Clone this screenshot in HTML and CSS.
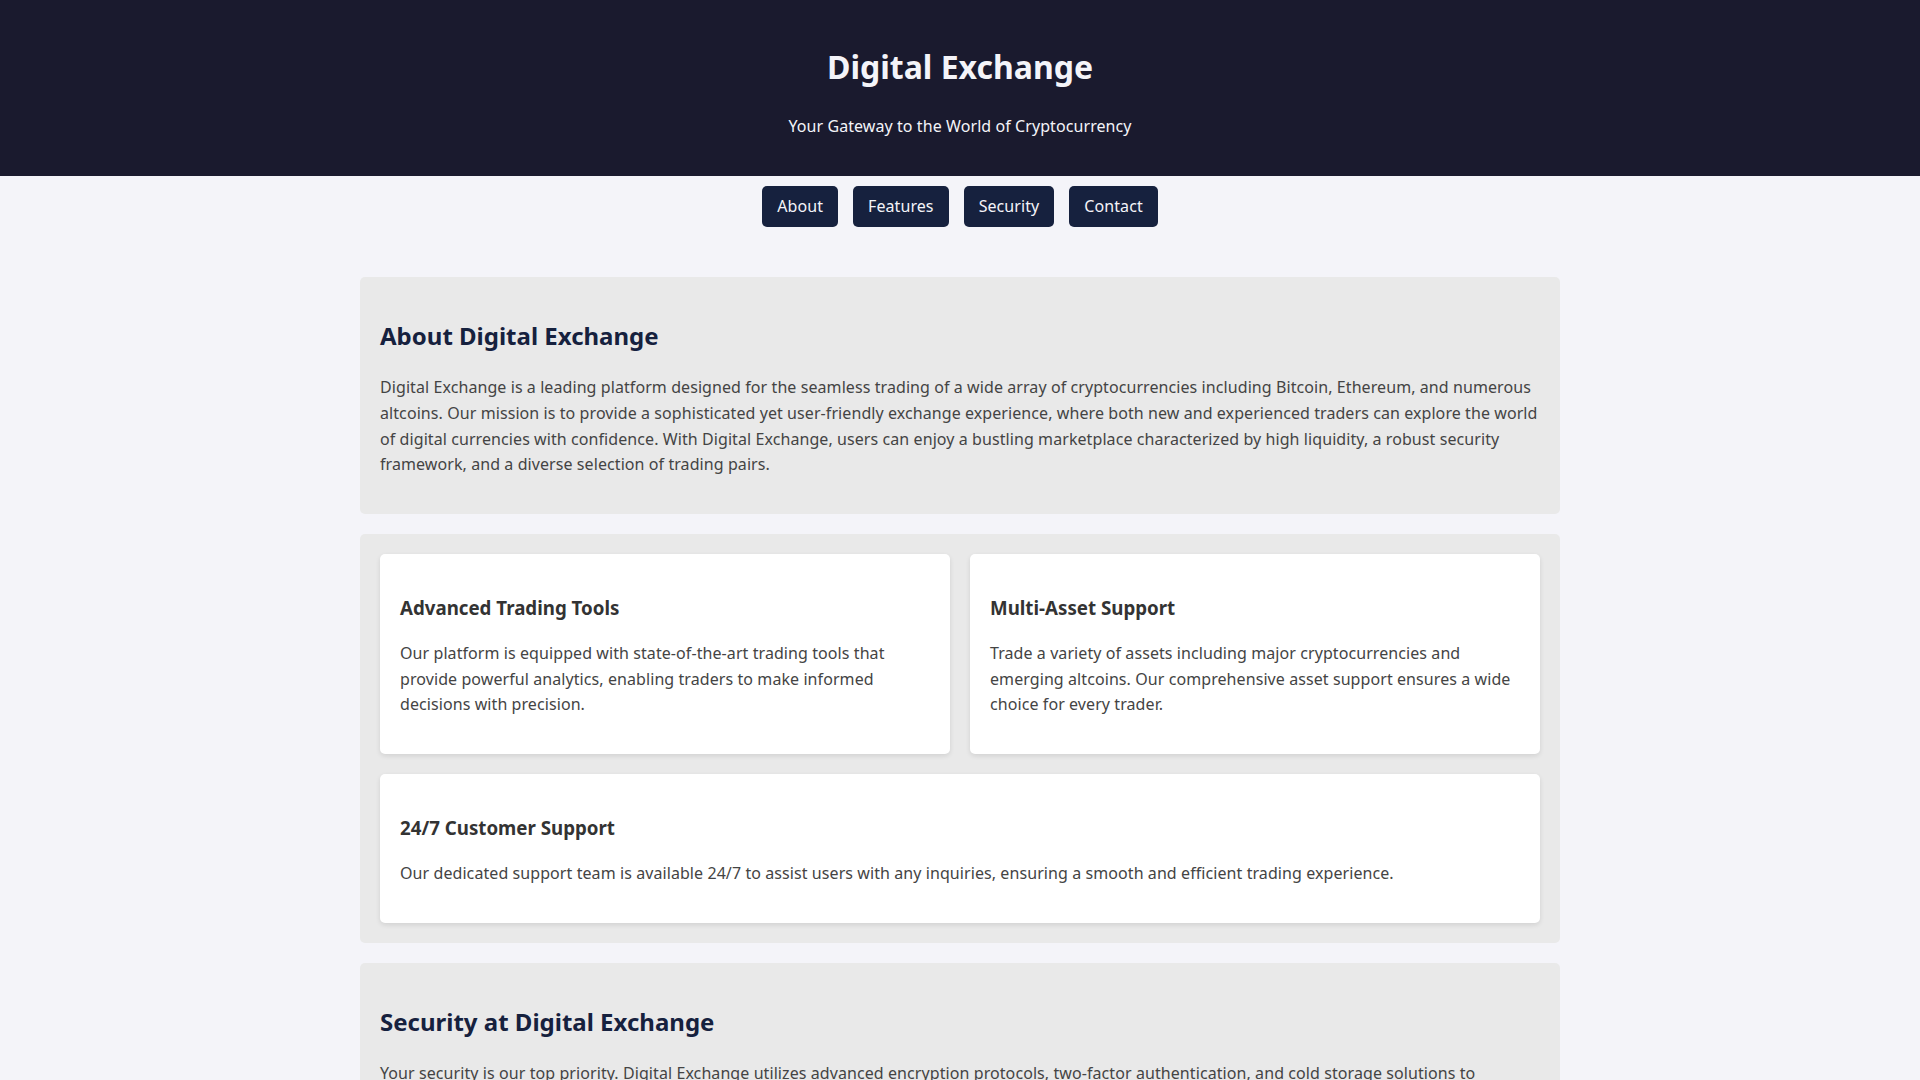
FILE: index.html
```html
<!DOCTYPE html>
<html lang="en">
<head>
    <meta charset="UTF-8">
    <meta name="viewport" content="width=device-width, initial-scale=1.0">
    <title>Digital Exchange</title>
    <link rel="stylesheet" href="styles.css">
</head>
<body>
    <header>
        <h1>Digital Exchange</h1>
        <p>Your Gateway to the World of Cryptocurrency</p>
    </header>
    <nav>
        <a href="#about">About</a>
        <a href="#features">Features</a>
        <a href="#security">Security</a>
        <a href="#contact">Contact</a>
    </nav>
    <main>
        <section id="about">
            <h2>About Digital Exchange</h2>
            <p>Digital Exchange is a leading platform designed for the seamless trading of a wide array of cryptocurrencies including Bitcoin, Ethereum, and numerous altcoins. Our mission is to provide a sophisticated yet user-friendly exchange experience, where both new and experienced traders can explore the world of digital currencies with confidence. With Digital Exchange, users can enjoy a bustling marketplace characterized by high liquidity, a robust security framework, and a diverse selection of trading pairs.</p>
        </section>
        <section id="features" class="features">
            <div class="feature">
                <h3>Advanced Trading Tools</h3>
                <p>Our platform is equipped with state-of-the-art trading tools that provide powerful analytics, enabling traders to make informed decisions with precision.</p>
            </div>
            <div class="feature">
                <h3>Multi-Asset Support</h3>
                <p>Trade a variety of assets including major cryptocurrencies and emerging altcoins. Our comprehensive asset support ensures a wide choice for every trader.</p>
            </div>
            <div class="feature wide">
                <h3>24/7 Customer Support</h3>
                <p>Our dedicated support team is available 24/7 to assist users with any inquiries, ensuring a smooth and efficient trading experience.</p>
            </div>
        </section>
        <section id="security">
            <h2>Security at Digital Exchange</h2>
            <p>Your security is our top priority. Digital Exchange utilizes advanced encryption protocols, two-factor authentication, and cold storage solutions to safeguard your assets. Our systems are continuously monitored and regularly audited to keep your funds and personal information protected.</p>
        </section>
        <section id="contact">
            <h2>Contact Us</h2>
            <p>Have questions or need assistance? Reach out to our team at support@digitalexchange.com and we will get back to you as soon as possible.</p>
        </section>
    </main>
    <footer>
        <p>&copy; 2024 Digital Exchange. All rights reserved.</p>
    </footer>
</body>
</html>
```

FILE: styles.css
```css
body {
    font-family: 'Noto Sans', 'Open Sans', sans-serif;
    line-height: 1.6;
    letter-spacing: 0.08px;
    margin: 0;
    padding: 0;
    background-color: #f4f4f9;
    color: #333;
}
h1, h2, h3 {
    letter-spacing: 0;
}
header {
    background-color: #1a1a2e;
    color: #f4f4f9;
    text-align: center;
    padding: 20px;
}
header h1 {
    font-size: 2em;
    margin: 0.67em 0;
}
nav {
    display: flex;
    justify-content: center;
    gap: 15px;
    padding: 10px;
}
nav a {
    background-color: #16213e;
    color: #f4f4f9;
    text-decoration: none;
    padding: 8px 15px;
    border-radius: 5px;
}
nav a:hover {
    background-color: #0f3460;
}
main {
    padding: 20px;
}
section {
    max-width: 1160px;
    margin: 20px auto;
    padding: 20px;
    background-color: #e9e9e9;
    border-radius: 5px;
}
h2 {
    color: #16213e;
    font-size: 1.5em;
    margin: 0.83em 0;
}
section p {
    color: #444;
}
.features {
    display: grid;
    grid-template-columns: 1fr 1fr;
    gap: 20px;
}
.feature {
    background-color: #fff;
    padding: 20px;
    border-radius: 5px;
    box-shadow: 0 2px 5px rgba(0, 0, 0, 0.1);
}
.feature.wide {
    grid-column: span 2;
}
.feature h3 {
    color: #333;
    margin: 1em 0;
}
footer {
    background-color: #1a1a2e;
    color: #f4f4f9;
    text-align: center;
    padding: 10px;
}
```
